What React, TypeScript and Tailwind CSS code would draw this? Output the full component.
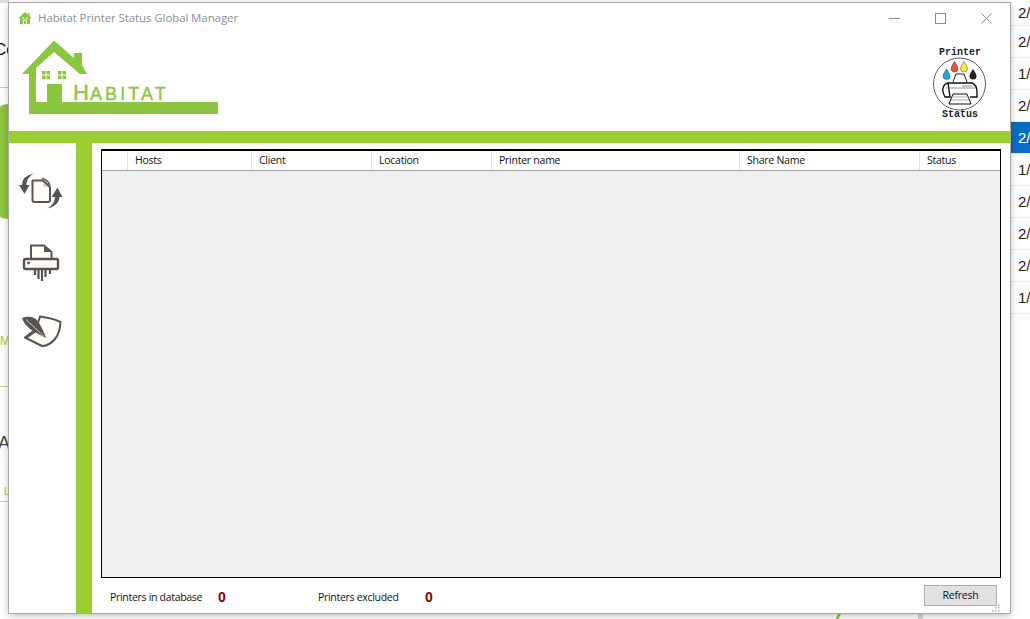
const columns = [
  { label: "", width: "w-[26px]" },
  { label: "Hosts", width: "w-[124px]" },
  { label: "Client", width: "w-[120px]" },
  { label: "Location", width: "w-[120px]" },
  { label: "Printer name", width: "w-[248px]" },
  { label: "Share Name", width: "w-[180px]" },
  { label: "Status", width: "flex-1" },
];

const dates = ["2/", "2/", "1/", "2/", "2/", "1/", "2/", "2/", "2/", "1/"];

function HabitatLogo() {
  return (
    <svg width="197" height="75" viewBox="22 40 197 75" className="block">
      <path
        fill="#8cc63f"
        fillRule="evenodd"
        d="M54 40.5 L74 58 V53 H82 V65 L87 74 H80 L54 52 L36 68 V102 H47 V84 H62 V102 H218 V114 H29 V74 H22 Z"
      />
      <rect x="42" y="71" width="8" height="8" fill="#8cc63f" />
      <rect x="58" y="71" width="8" height="8" fill="#8cc63f" />
      <path d="M46 71V79M42 75H50M62 71V79M58 75H66" stroke="#fff" strokeWidth="1" />
      <text x="73" y="100" fill="#8cc63f" stroke="#8cc63f" strokeWidth="0.4" fontFamily="'Liberation Sans', sans-serif" fontSize="22">
        H
      </text>
      <text x="90" y="100" fill="#8cc63f" stroke="#8cc63f" strokeWidth="0.4" fontFamily="'Liberation Sans', sans-serif" fontSize="18" letterSpacing="3.1">
        ABITAT
      </text>
    </svg>
  );
}

function PrinterStatusLogo() {
  return (
    <svg width="56" height="74" viewBox="932 45 56 74" className="block">
      <text x="960" y="54" textAnchor="middle" fontFamily="'Liberation Mono', monospace" fontWeight="700" fontSize="10" fill="#222">
        Printer
      </text>
      <circle cx="959.5" cy="83" r="26" fill="#fff" stroke="#333" strokeWidth="0.8" />
      <path d="M946.5 68 q-3.5 5 -3.5 7 a3.5 3.5 0 0 0 7 0 q0 -2 -3.5 -7Z" fill="#2aa5dc" stroke="#222" strokeWidth="0.4" />
      <path d="M954.5 60.5 q-3.5 5 -3.5 7 a3.5 3.5 0 0 0 7 0 q0 -2 -3.5 -7Z" fill="#e9583c" stroke="#222" strokeWidth="0.4" />
      <path d="M964 60.5 q-3.5 5 -3.5 7 a3.5 3.5 0 0 0 7 0 q0 -2 -3.5 -7Z" fill="#fbe94a" stroke="#222" strokeWidth="0.4" />
      <path d="M973 68 q-3.5 5 -3.5 7 a3.5 3.5 0 0 0 7 0 q0 -2 -3.5 -7Z" fill="#222" />
      <path d="M953 81 L956 73 H964 L967 81" fill="none" stroke="#222" strokeWidth="1" />
      <path
        d="M948 82 H972 Q977 84 977 91 V96 H970 M950 96 H945 Q942 90 943 87 Q944 83 948 82Z"
        fill="#fff"
        stroke="#111"
        strokeWidth="1.4"
      />
      <path d="M946 87 H975 M962 85 H972" stroke="#777" strokeWidth="0.8" />
      <path d="M953 93 H967 L971 103 H949Z" fill="#fff" stroke="#111" strokeWidth="1" />
      <path d="M952 96 H968 M951 99 H969" stroke="#777" strokeWidth="0.6" />
      <text x="960" y="115.5" textAnchor="middle" fontFamily="'Liberation Mono', monospace" fontWeight="700" fontSize="10" fill="#222">
        Status
      </text>
    </svg>
  );
}

function SyncIcon() {
  return (
    <svg width="44" height="38" viewBox="19 173 44 38" className="block">
      <path d="M32.5 180.5 H43 L50 187 V200 Q50 202 48 202 H34.5 Q32.5 202 32.5 200Z" fill="#fffdf8" stroke="#5b5353" strokeWidth="2" strokeLinejoin="round" />
      <path d="M43 180.5 V187 H50Z" fill="#5b5353" opacity="0.2" />
      <path d="M33.5 173.5 Q22 176 22 185 H19 L24.5 194 L29.5 185 H26.5 Q26.5 178 33.5 173.5Z" fill="#5b5353" />
      <path d="M47.5 208.5 Q59 206 59.5 197 H62.5 L57.5 187.5 L51.5 197 H55 Q55 204 47.5 208.5Z" fill="#5b5353" />
      <path d="M42 178.5 Q47 179 50 185" fill="none" stroke="#5b5353" strokeWidth="1.6" />
    </svg>
  );
}

function ShredderIcon() {
  return (
    <svg width="38" height="37" viewBox="22 244 38 37" className="block">
      <path d="M31 258 V245.5 H44 L51.5 252 V258" fill="#fffdf8" stroke="#5b5353" strokeWidth="2" strokeLinejoin="round" />
      <path d="M44 245.5 V252 H51.5Z" fill="#5b5353" />
      <rect x="24" y="259" width="34" height="10" rx="1.5" fill="#fffdf8" stroke="#5b5353" strokeWidth="2.4" />
      <circle cx="28.5" cy="263" r="1.4" fill="#5b5353" />
      <path d="M35 270V275 M38.5 270V279 M42 270V281 M45.5 270V277 M50 270V274" stroke="#5b5353" strokeWidth="2.2" />
    </svg>
  );
}

function FeatherIcon() {
  return (
    <svg width="42" height="34" viewBox="21 315 42 34" className="block">
      <path
        d="M40 316.5 Q52 318 60.5 322 Q60 333 55 339 Q49 346 42 346 L25 337.5 L36 329 Z"
        fill="#fffdf8"
        stroke="#5b5353"
        strokeWidth="2"
        strokeLinejoin="round"
      />
      <path d="M22 318 Q30 315 36 319 Q42 326 46 338 Q36 333 30 329 Q24 324 22 318Z" fill="#5b5353" />
      <path d="M26 319.5 L44 336.5" stroke="#fffdf8" strokeWidth="0.7" />
      <path d="M26 338 L36 331" stroke="#5b5353" strokeWidth="2" />
    </svg>
  );
}

export default function App() {
  return (
    <div className="relative h-[619px] w-[1030px] overflow-hidden bg-white font-['Open_Sans',sans-serif] text-[#111]">
      {/* what lies behind the window */}
      <div className="absolute left-0 top-0 h-[3px] w-[9px] bg-[#dcdcdc]" />
      <span className="absolute left-[-6px] top-[40px] font-['Liberation_Sans',sans-serif] text-[17px] leading-5">Co</span>
      <div className="absolute left-0 top-[87px] h-px w-[9px] bg-[#b9d98c]" />
      <div className="absolute left-0 top-[104px] h-[115px] w-[9px] rounded-tl-[9px_3px] rounded-bl-[9px_3px] bg-[#8cc63f]" />
      <span className="absolute left-0 top-[333px] font-['Liberation_Sans',sans-serif] text-[12px] leading-4 text-[#b7c21a]">M</span>
      <div className="absolute left-0 top-[386px] h-px w-[9px] bg-[#b9d98c]" />
      <span className="absolute left-[-2px] top-[433px] font-['Liberation_Sans',sans-serif] text-[18px] leading-5 text-[#444]">A</span>
      <span className="absolute left-[4px] top-[486px] font-['Liberation_Sans',sans-serif] text-[10px] leading-3 text-[#9cc95a]">L</span>
      <div className="absolute left-0 top-[501px] h-px w-[9px] bg-[#b9d98c]" />

      <div className="absolute left-[1010px] top-0 flex w-[20px] flex-col">
        {dates.map((date, i) => (
          <div
            key={i}
            className={`flex h-[32px] items-center border-b border-[#eeeeee] pl-[8px] pt-[2px] font-['Liberation_Sans',sans-serif] text-[15px] first:h-[26px] ${
              i === 4 ? "bg-[#0a6cc4] text-white" : "text-[#222]"
            }`}
          >
            {date}
          </div>
        ))}
      </div>
      <div className="absolute left-[837px] top-[613px] h-[6px] w-[3px] skew-x-[-25deg] bg-[#8cc63f]" />
      <div className="absolute left-[918px] top-[613px] h-[6px] w-[5px] bg-[#d8d8d8]" />

      {/* window */}
      <div className="absolute left-[9px] top-[3px] flex h-[610px] w-[1001px] flex-col bg-white shadow-[0_0_0_1px_#a8a8a8,0_2px_8px_rgba(0,0,0,0.3)]">
        <div className="flex h-[30px] shrink-0 items-center pl-[9px]">
          <svg width="14" height="14" viewBox="0 0 14 14" className="block">
            <path d="M7 1 L10 3.6 V2 H11.5 V5 L13.5 7 H12 V13 H2 V7 H0.5Z" fill="#8cc63f" />
            <path d="M5.5 13 V9 H8.5 V13 M4 7 H6 M8 7 H10" stroke="#fff" strokeWidth="1" fill="none" />
          </svg>
          <span className="ml-[6px] text-[11.5px] leading-none tracking-[-0.1px] text-[#8a8f98]">Habitat Printer Status Global Manager</span>
          <div className="ml-auto mr-[18px] flex items-center gap-[35px]">
            <svg width="11" height="11" viewBox="0 0 11 11" className="block">
              <path d="M0 5.5H11" stroke="#8c8c8c" strokeWidth="1" />
            </svg>
            <svg width="11" height="11" viewBox="0 0 11 11" className="block">
              <rect x="0.5" y="0.5" width="10" height="10" fill="none" stroke="#8c8c8c" strokeWidth="1" />
            </svg>
            <svg width="11" height="11" viewBox="0 0 11 11" className="block">
              <path d="M0.5 0.5L10.5 10.5M10.5 0.5L0.5 10.5" stroke="#8c8c8c" strokeWidth="1" />
            </svg>
          </div>
        </div>
        <div className="flex h-[98px] shrink-0 items-start justify-between pl-[13px] pr-[22px] pt-[7px]">
          <HabitatLogo />
          <div className="mt-[6px]">
            <PrinterStatusLogo />
          </div>
        </div>
        <div className="h-[12px] shrink-0 bg-[#9acd32]" />

        <div className="flex min-h-0 flex-1">
          <div className="flex w-[67px] shrink-0 flex-col items-start pl-[10px] pt-[30px]">
            <SyncIcon />
            <div className="ml-[3px] mt-[33px]">
              <ShredderIcon />
            </div>
            <div className="ml-[2px] mt-[34px]">
              <FeatherIcon />
            </div>
          </div>
          <div className="w-[16px] shrink-0 bg-[#9acd32]" />
          <div className="flex min-w-0 flex-1 flex-col px-[9px] pt-[6px]">
            <div className="h-[429px] shrink-0 border border-t-2 border-black bg-[#f0f0f0]">
              <div className="flex h-[20px] border-b border-[#a0a0a0] bg-white">
                {columns.map((column, i) => (
                  <div
                    key={i}
                    className={`${column.width} flex items-center border-r border-[#e3e3e3] pl-[7px] text-[10.5px] leading-none tracking-[-0.25px] last:border-r-0`}
                  >
                    {column.label}
                  </div>
                ))}
              </div>
            </div>
            <div className="relative flex flex-1 items-center pl-[9px] pr-[4px]">
              <span className="mt-[3px] w-[108px] text-[10.5px] leading-none tracking-[-0.3px]">Printers in database</span>
              <span className="mt-[3px] w-[100px] font-['Liberation_Sans',sans-serif] text-[14px] font-bold leading-none text-[#8b0000]">0</span>
              <span className="mt-[3px] w-[107px] text-[10.5px] leading-none tracking-[-0.3px]">Printers excluded</span>
              <span className="mt-[3px] font-['Liberation_Sans',sans-serif] text-[14px] font-bold leading-none text-[#8b0000]">0</span>
              <button
                type="button"
                className="ml-auto flex h-[21px] w-[73px] items-center justify-center border border-[#adadad] bg-[#e1e1e1] text-[10.5px] leading-none tracking-[-0.2px]"
              >
                Refresh
              </button>
              <svg width="9" height="9" viewBox="0 0 9 9" className="absolute bottom-[1px] right-[1px] block">
                <path d="M7 1h1.5v1.5H7zM4 4h1.5v1.5H4zM7 4h1.5v1.5H7zM1 7h1.5v1.5H1zM4 7h1.5v1.5H4zM7 7h1.5v1.5H7z" fill="#b5b5b5" />
              </svg>
            </div>
          </div>
        </div>
      </div>
    </div>
  );
}
